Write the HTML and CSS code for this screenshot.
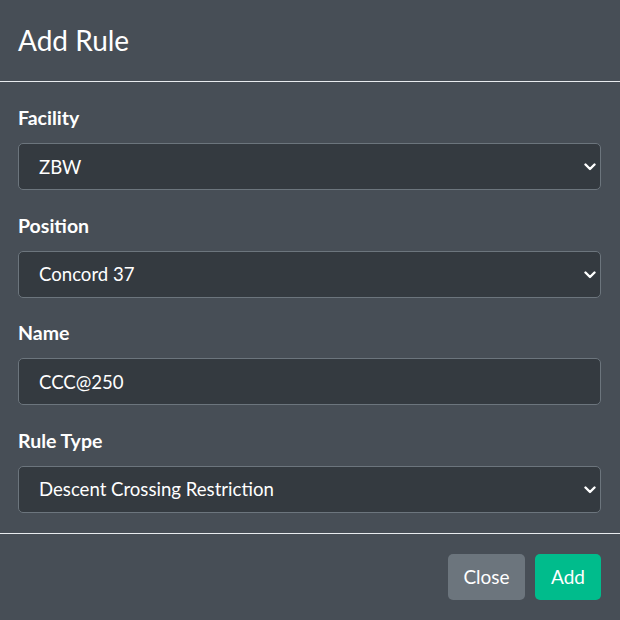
FILE: index.html
```html
<!DOCTYPE html>
<html>
<head>
<meta charset="utf-8">
<link rel="stylesheet" href="styles.css">
</head>
<body>
<div class="modal">
  <div class="modal-header"><h2 class="title">Add Rule</h2></div>
  <div class="modal-body">
    <div class="field">
      <label class="label">Facility</label>
      <div class="select"><span>ZBW</span><svg class="chev" viewBox="0 0 12 8" width="12" height="8"><path d="M1.5 1.5l4.5 4.5 4.5-4.5" fill="none" stroke="#fff" stroke-width="2.4" stroke-linecap="round" stroke-linejoin="round"/></svg></div>
    </div>
    <div class="field">
      <label class="label">Position</label>
      <div class="select"><span>Concord 37</span><svg class="chev" viewBox="0 0 12 8" width="12" height="8"><path d="M1.5 1.5l4.5 4.5 4.5-4.5" fill="none" stroke="#fff" stroke-width="2.4" stroke-linecap="round" stroke-linejoin="round"/></svg></div>
    </div>
    <div class="field">
      <label class="label">Name</label>
      <div class="select"><span>CCC@250</span></div>
    </div>
    <div class="field">
      <label class="label">Rule Type</label>
      <div class="select"><span>Descent Crossing Restriction</span><svg class="chev" viewBox="0 0 12 8" width="12" height="8"><path d="M1.5 1.5l4.5 4.5 4.5-4.5" fill="none" stroke="#fff" stroke-width="2.4" stroke-linecap="round" stroke-linejoin="round"/></svg></div>
    </div>
  </div>
  <div class="modal-footer">
    <button class="btn btn-close">Close</button>
    <button class="btn btn-add">Add</button>
  </div>
</div>
</body>
</html>
```
FILE: styles.css
```css
html, body { margin: 0; padding: 0; background: #474e56; }
body { font-family: "Lato", "Noto Sans", sans-serif; color: #fff; }
.modal { width: 620px; height: 620px; background: #474e56; }
.modal-header { height: 82px; border-bottom: 1px solid #e9ecef; box-sizing: border-box; padding: 0 18px 2px; display: flex; align-items: center; }
.title { margin: 0; font-size: 28px; font-weight: 400; }
.modal-body { padding: 22px 19px 20px 18px; box-sizing: border-box; border-bottom: 1px solid #e9ecef; display: flex; flex-direction: column; gap: 21.5px; }
.label { display: block; font-weight: 700; font-size: 19.5px; line-height: 27px; margin-bottom: 12px; }
.select { height: 47px; box-sizing: border-box; border: 1px solid #6c757d; border-radius: 5px; background: #343a40; display: flex; align-items: center; justify-content: space-between; padding: 0 4px 0 20px; font-size: 18.6px; }
.chev { display: block; margin-top: 1px; }
.modal-footer { display: flex; justify-content: flex-end; gap: 10px; padding: 20px 19px 0 0; }
.btn { height: 46px; border: none; border-radius: 5px; color: #fff; font-family: inherit; font-size: 19px; padding: 0; }
.btn-close { background: #6c757d; width: 77px; }
.btn-add { background: #00bc8c; width: 66px; }
```
